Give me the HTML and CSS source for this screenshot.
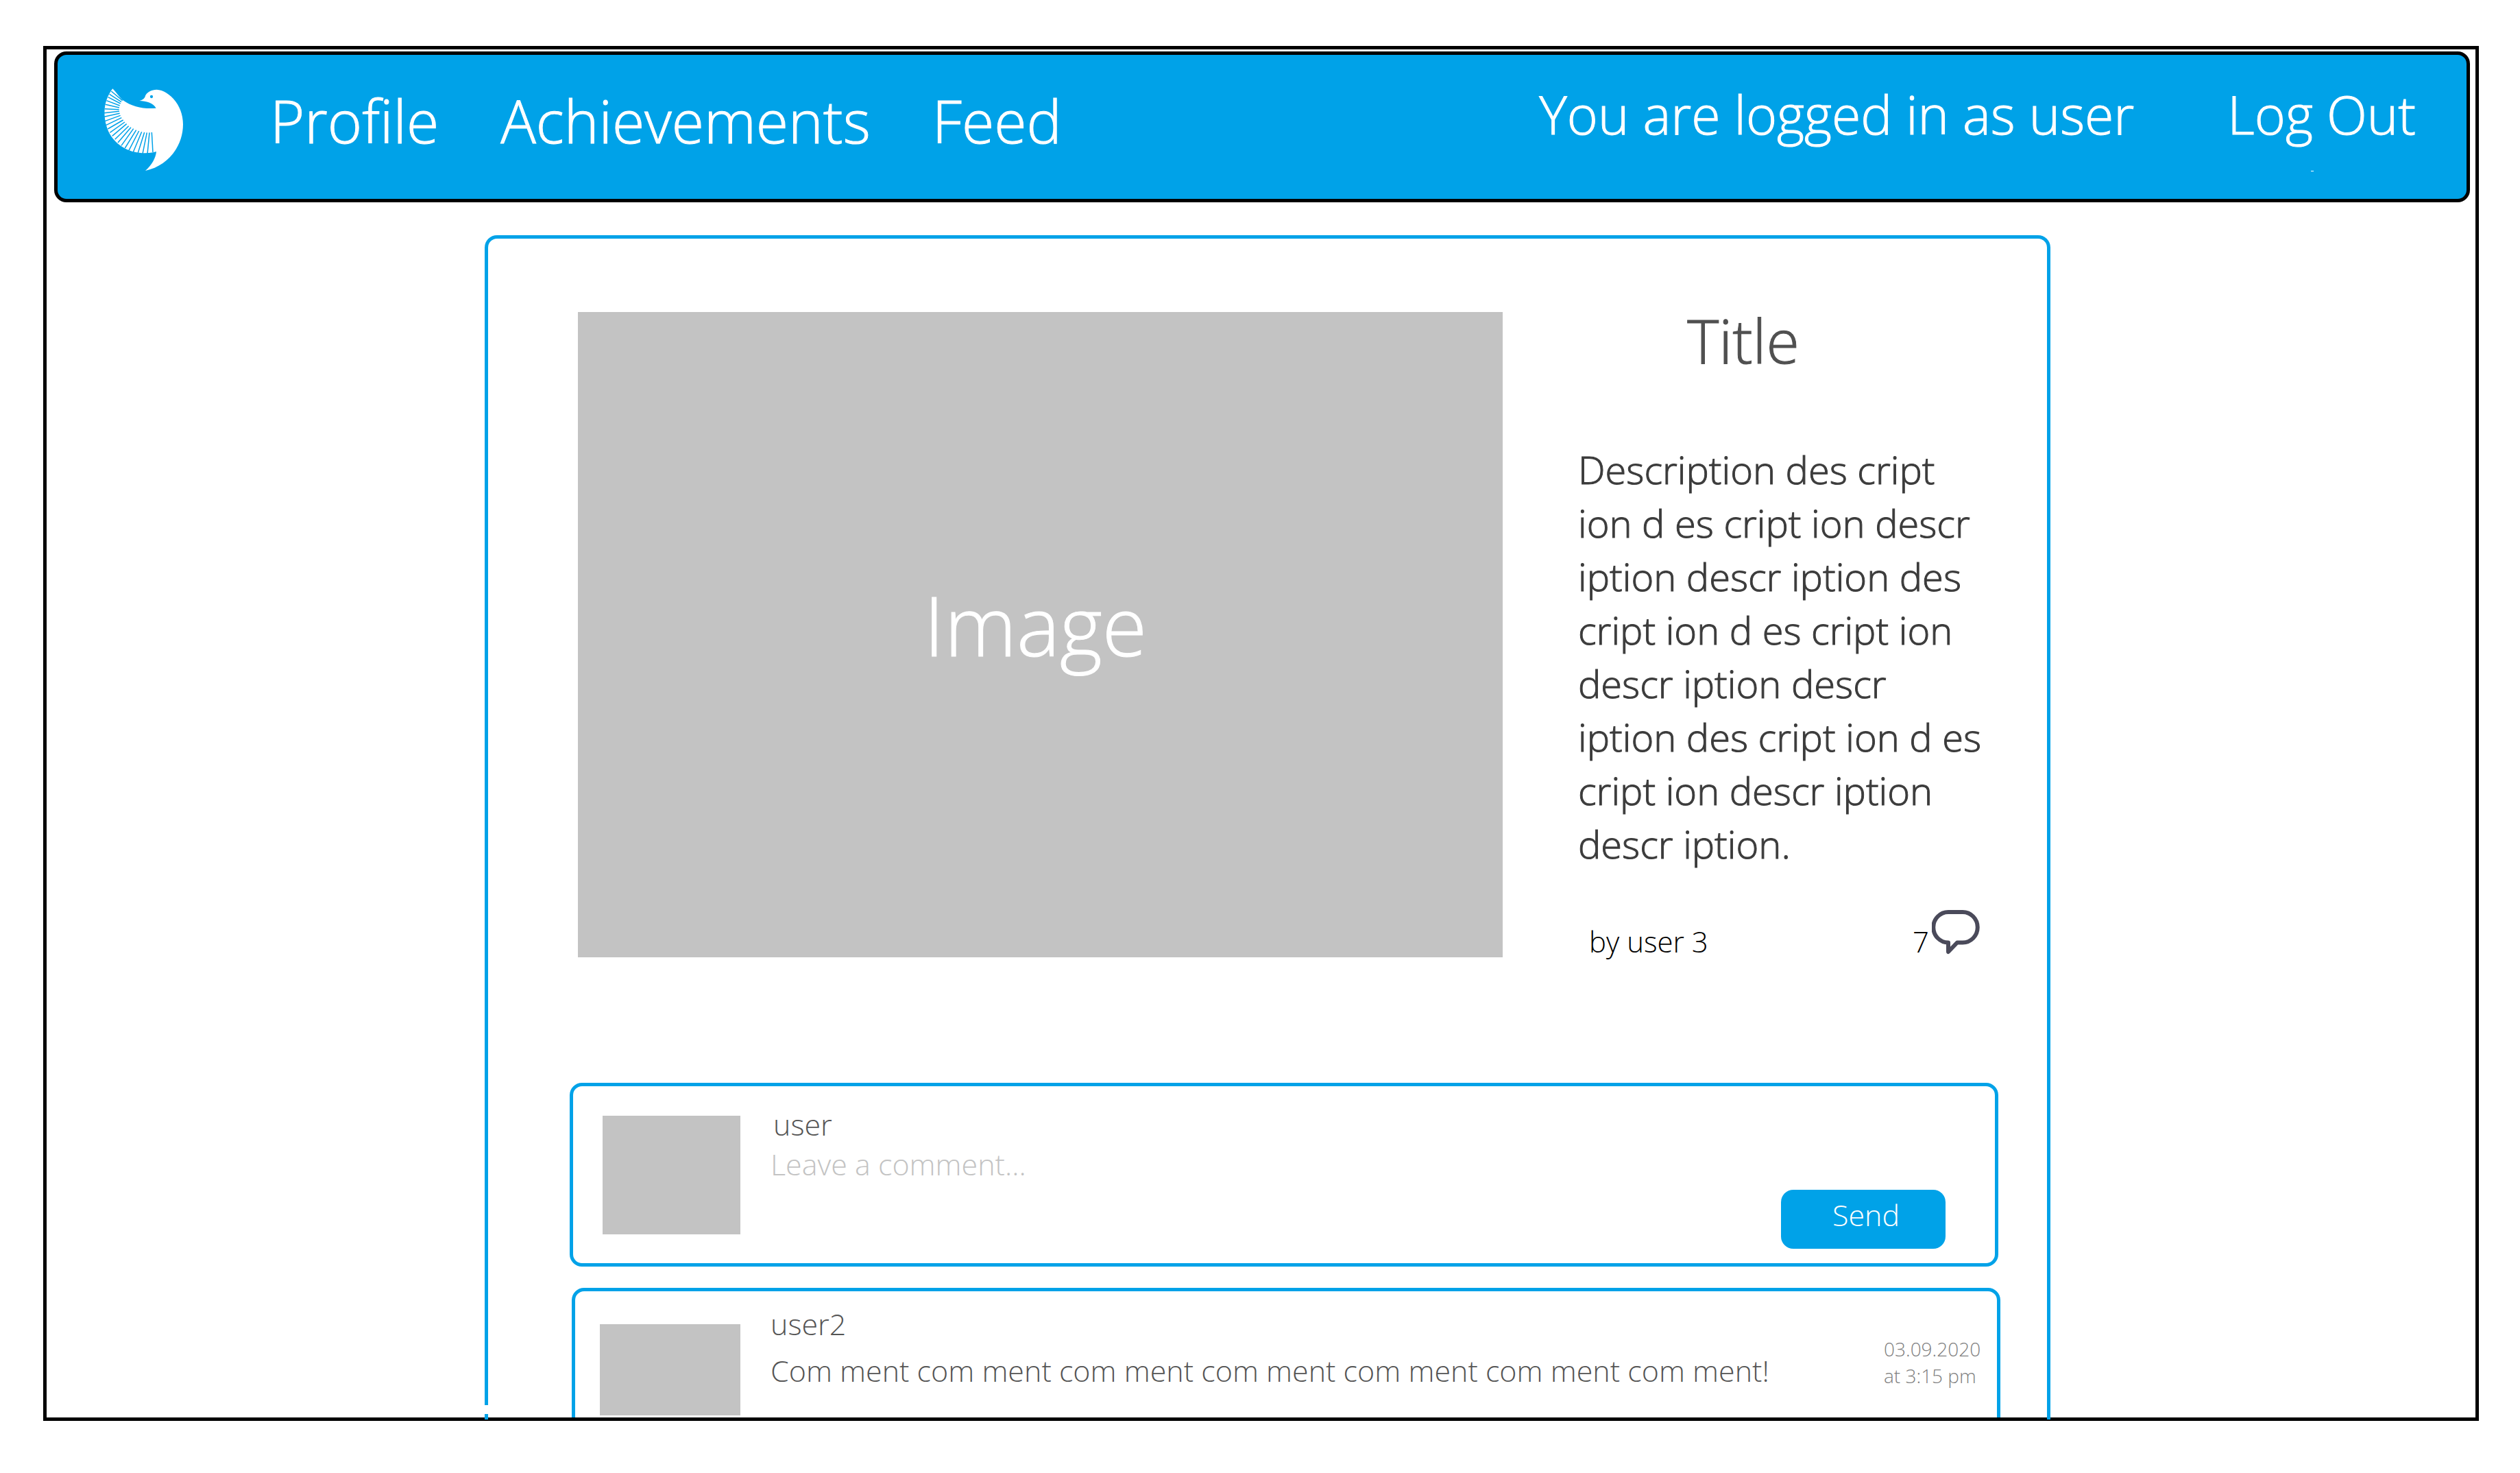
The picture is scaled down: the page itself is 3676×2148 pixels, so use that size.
FILE: index.html
```html
<!DOCTYPE html>
<html lang="en">
<head>
<meta charset="utf-8">
<title>Post</title>
<link rel="stylesheet" href="styles.css">
</head>
<body>
<div class="frame">
  <header class="topbar">
    <a class="logo" href="#" aria-label="Home">
      <svg viewBox="0 0 480 450" aria-hidden="true">
        <path fill="#fff" d="M103 58C118 74 130 92 146 107C190 139 240 147 293 143C280 120 250 112 220 111C235 106 240 102 244 95C250 72 274 62 296 62C345 64 411 125 411 214C411 310 345 396 246 417C275 392 292 360 294 333L280 337C200 350 135 320 98 268C68 225 55 150 82 93C88 80 95 68 103 58Z"/>
        <g stroke="#00a2e8" stroke-width="4.500">
          <path d="M97 69L146 110M89 82L141 116M83 95L137 123M76 110L134 132M71 127L132 141M68 146L131 149M66 164L132 157M66 181L134 166M69 200L137 175M75 217L142 185M82 234L149 195M91 250L156 204M101 265L164 212M113 280L173 221M126 294L183 227M141 307L194 233M157 318L206 239M174 328L218 243M193 335L230 247M213 341L242 249M234 343L253 250M255 344L264 250"/>
          <path d="M279 336L274 249"/>
        </g>
        <circle cx="273" cy="93" r="6.500" fill="#00a2e8"/>
      </svg>
    </a>
    <nav class="nav">
      <a href="#">Profile</a>
      <a href="#">Achievements</a>
      <a href="#">Feed</a>
    </nav>
    <div class="session">
      <span>You are logged in as user</span>
      <a class="logout" href="#">Log Out</a>
    </div>
  </header>

  <main class="card">
    <article class="post">
      <div class="picture">Image</div>
      <div class="details">
        <h1 class="title">Title</h1>
        <p class="description">Description des cript ion d es cript ion descr iption descr iption des cript ion d es cript ion descr iption descr iption des cript ion d es cript ion descr iption descr iption.</p>
        <footer class="meta">
          <span class="author">by user 3</span>
          <a class="count" href="#comments">7<svg viewBox="0 0 70 68" aria-label="comments"><path d="M24 4H45A21.500 22 0 0 1 45 48.500H37L24 62V48.500A21.500 22 0 0 1 24 4Z" fill="none" stroke="#4a4a5a" stroke-width="6" stroke-linejoin="round"/></svg></a>
        </footer>
      </div>
    </article>

    <section class="comments" id="comments">
      <form class="box composer">
        <div class="avatar"></div>
        <div class="body">
          <label class="name" for="comment">user</label>
          <input class="field" id="comment" type="text" placeholder="Leave a comment...">
        </div>
        <button class="send" type="button">Send</button>
      </form>
      <article class="box comment">
        <div class="avatar"></div>
        <div class="body">
          <div class="name">user2</div>
          <p class="text">Com ment com ment com ment com ment com ment com ment com ment!</p>
        </div>
        <time class="date" datetime="2020-09-03T15:15">03.09.2020<br>at 3:15 pm</time>
      </article>
    </section>
  </main>
</div>
</body>
</html>
```
FILE: styles.css
```css
* { box-sizing: border-box; }

body {
  margin: 0;
  background: #fff;
  font-family: "Open Sans", "Noto Sans", sans-serif;
  font-weight: 300;
  color: #555;
}

a { color: inherit; text-decoration: none; }
h1, p { margin: 0; font-weight: inherit; }

.frame {
  display: flex;
  flex-direction: column;
  height: calc(100vh - 143px);
  margin: 67px 60px 76px 63px;
  padding: 3px 8px 0 11px;
  border: 5px solid #000;
}

/* top bar */
.topbar {
  display: flex;
  flex: none;
  align-items: center;
  height: 220px;
  padding: 0 74px 0 46px;
  border: 5px solid #000;
  border-radius: 18px;
  background: #00a2e8;
  color: #fff;
}

.logo { width: 160px; height: 150px; }
.logo svg { display: block; width: 100%; height: 100%; }

/* the light weight is drawn a touch heavier at display sizes */
.nav, .session, .picture, .title, .description { -webkit-text-stroke: 1px currentColor; }

.nav {
  display: flex;
  gap: 90px;
  margin-left: 104px;
  padding-bottom: 18px;
  font-size: 86px;
  line-height: 110px;
}

.session {
  display: flex;
  gap: 136px;
  margin-left: auto;
  padding-bottom: 36px;
  font-size: 77px;
  line-height: 110px;
}

.logout { position: relative; }
.logout::after {
  content: "";
  position: absolute;
  left: 122px;
  top: 137px;
  width: 4px;
  height: 1px;
  background: #fff;
}

/* post card */
.card {
  position: relative;
  flex: 1;
  min-height: 0;
  margin: 48px 612px -3px 628px;
  padding: 107px 0 0 119px;
  border: 5px solid #00a2e8;
  border-bottom: 0;
  border-radius: 18px 18px 0 0;
}
.card::after {
  content: "";
  position: absolute;
  left: -5px;
  bottom: 8px;
  width: 5px;
  height: 13px;
  background: #fff;
}

.post {
  display: flex;
  height: 941px;
  margin-left: 12px;
}

.picture {
  display: flex;
  flex: 1;
  align-items: center;
  justify-content: center;
  padding-right: 14px;
  padding-bottom: 30px;
  background: #c3c3c3;
  color: #fff;
  font-size: 119px;
}

.details {
  display: flex;
  flex-direction: column;
  width: 794px;
  padding: 0 82px 0 110px;
}

.title {
  padding-right: 120px;
  color: #505050;
  font-size: 88px;
  line-height: 82px;
  text-align: center;
}

.description {
  margin-top: 108px;
  color: #3c3c3c;
  font-size: 56px;
  line-height: 78px;
}

.meta {
  display: flex;
  align-items: flex-end;
  justify-content: space-between;
  margin-top: auto;
  padding: 0 16px;
  color: #000;
  font-size: 42px;
  line-height: 46px;
}
.count { display: flex; align-items: flex-end; gap: 4px; }
.count svg { width: 70px; height: 68px; margin-bottom: 2px; }

/* comments */
.comments {
  display: flex;
  flex-direction: column;
  gap: 31px;
  height: 488px;
  margin-top: 183px;
  overflow: hidden;
  font-size: 43px;
}

.box {
  display: flex;
  flex: none;
  height: 268px;
  border: 5px solid #00a2e8;
  border-radius: 18px;
}

.composer { margin-right: 71px; padding: 43px 72px 0 43px; }
.comment { margin: 0 68px 0 3px; padding: 48px 16px 0 36px; }

.avatar { flex: none; width: 201px; height: 173px; background: #c3c3c3; }
.comment .avatar { width: 205px; height: 133px; }

.body { flex: 1; padding-left: 44px; }
.name { display: block; line-height: 56px; }
.composer .name { margin-top: -15px; padding-left: 4px; }
.comment .name { margin-top: -28px; }
.text { margin-top: 12px; line-height: 56px; white-space: nowrap; }

.field {
  display: block;
  width: 100%;
  height: 58px;
  padding: 0;
  border: 0;
  outline: 0;
  background: none;
  font: inherit;
}
.field::placeholder { color: #c3c3c3; opacity: 1; }

.send {
  align-self: flex-start;
  width: 240px;
  height: 86px;
  margin-top: 108px;
  padding: 0 0 14px 8px;
  border: 0;
  border-radius: 18px;
  background: #00a2e8;
  color: #fff;
  font: inherit;
}

.date {
  width: 149px;
  margin-top: 17px;
  color: #7f7f7f;
  font-size: 28px;
  line-height: 39px;
  white-space: nowrap;
}
```
